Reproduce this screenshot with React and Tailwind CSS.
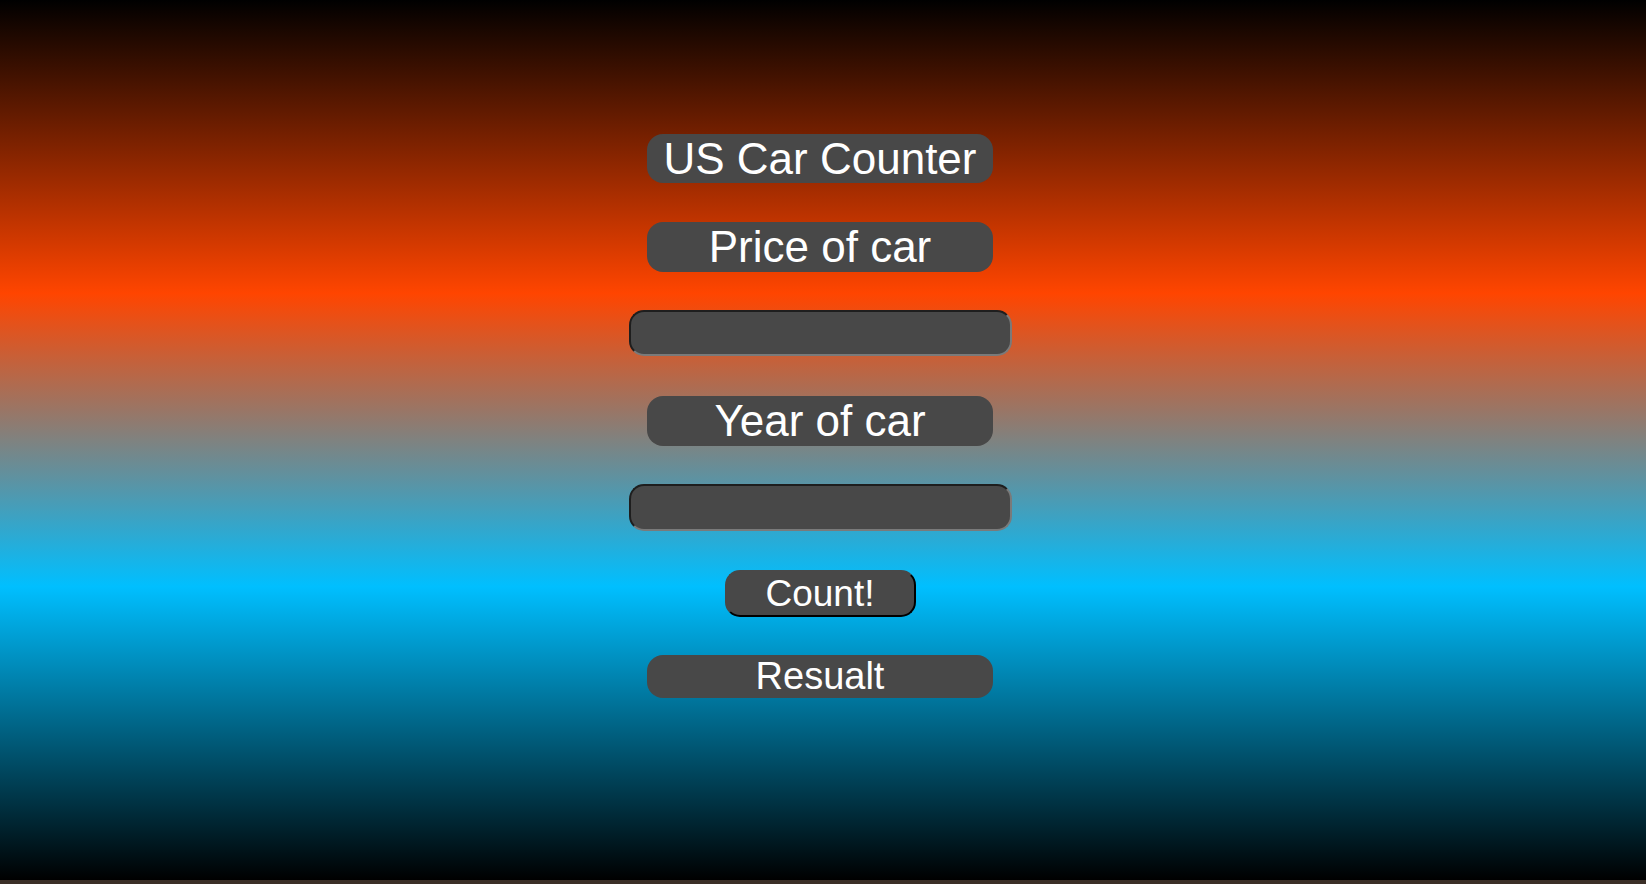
import React, { useState } from "react";

const App = () => {
  const [price, setPrice] = useState("");
  const [year, setYear] = useState("");
  const [result, setResult] = useState("Resualt");

  const handleCount = () => {
    if (!price || !year) return;
    setResult(`${price} / ${year}`);
  };

  return (
    <div className="h-[884px] w-full bg-[#3b2f27] font-['Liberation_Sans',Arial,sans-serif]">
      <div className="h-[880px] w-full bg-[linear-gradient(to_bottom,#000000,#ff4500,#00bfff,#000000)] flex flex-col items-center pt-[134px] pr-[6px]">
        <h1 className="w-[346px] h-[49px] rounded-[16px] bg-[#484848] text-white text-[44px] leading-[49px] text-center">
          US Car Counter
        </h1>

        {/* Price */}
        <div className="mt-[39px] w-[346px] h-[50px] rounded-[16px] bg-[#484848] text-white text-[44px] leading-[50px] text-center">
          Price of car
        </div>
        <input
          type="text"
          value={price}
          onChange={(e) => setPrice(e.target.value)}
          className="mt-[38px] w-[383px] h-[46px] rounded-[15px] bg-[#484848] text-white text-[28px] px-4 outline-none border-2 border-t-[#1e1e1e] border-l-[#1e1e1e] border-b-[#7a7a7a] border-r-[#7a7a7a]"
        />

        {/* Year */}
        <div className="mt-[40px] w-[346px] h-[50px] rounded-[16px] bg-[#484848] text-white text-[44px] leading-[50px] text-center">
          Year of car
        </div>
        <input
          type="text"
          value={year}
          onChange={(e) => setYear(e.target.value)}
          className="mt-[38px] w-[383px] h-[47px] rounded-[15px] bg-[#484848] text-white text-[28px] px-4 outline-none border-2 border-t-[#1e1e1e] border-l-[#1e1e1e] border-b-[#7a7a7a] border-r-[#7a7a7a]"
        />

        <button
          onClick={handleCount}
          className="mt-[39px] w-[191px] h-[47px] rounded-[15px] bg-[#484848] text-white text-[37px] leading-[41px] text-center border-2 border-t-[#484848] border-l-[#484848] border-b-black border-r-black cursor-pointer"
        >
          Count!
        </button>

        <div className="mt-[38px] w-[346px] h-[43px] rounded-[16px] bg-[#484848] text-white text-[38px] leading-[43px] text-center">
          {result}
        </div>
      </div>
    </div>
  );
};

export default App;
